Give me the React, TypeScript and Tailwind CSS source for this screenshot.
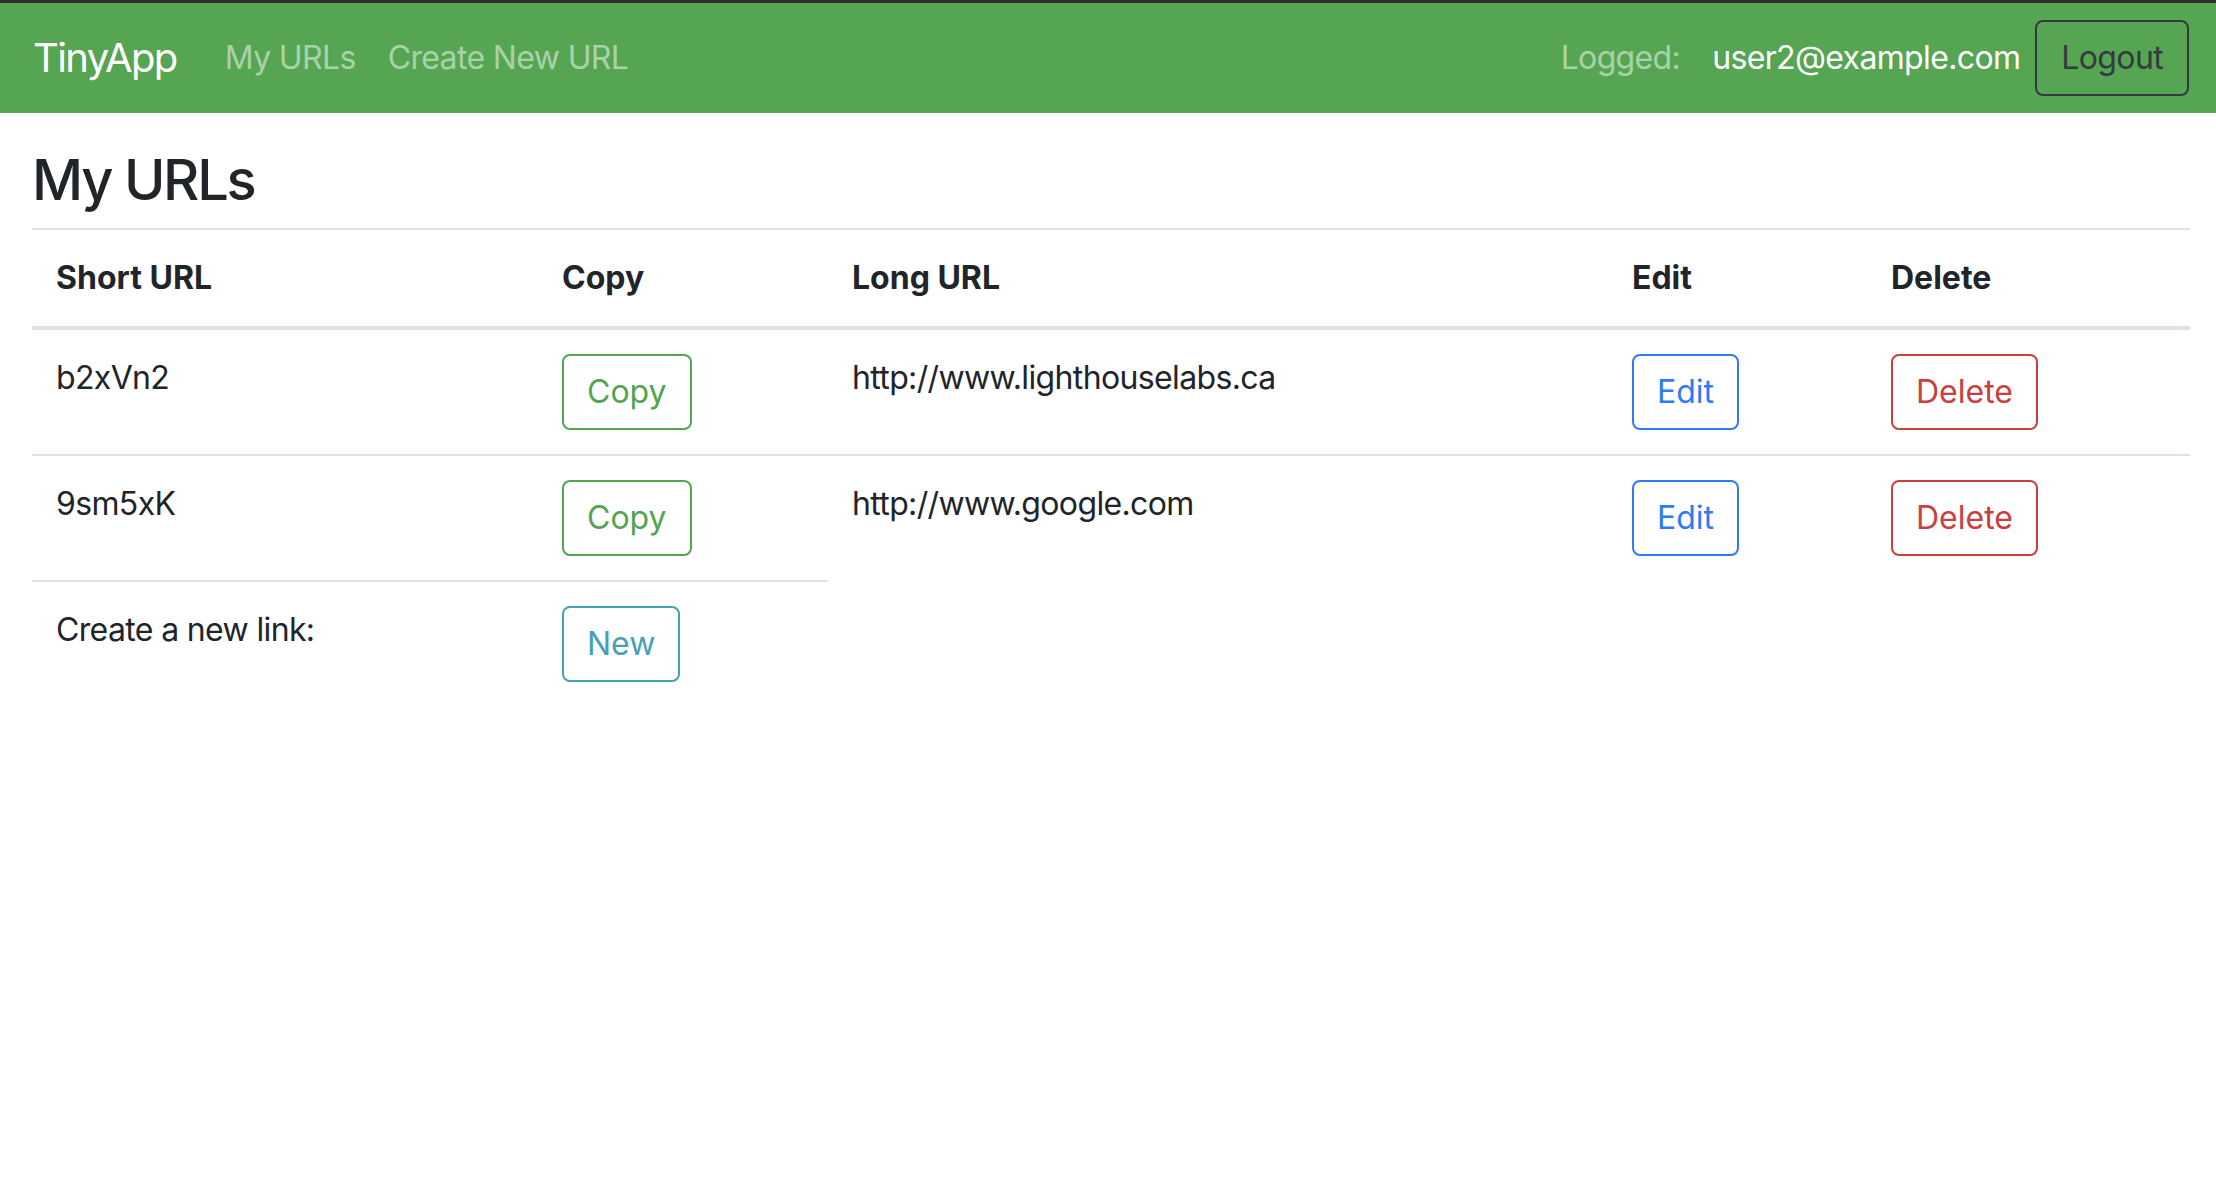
import React from "react";

const rows = [
  { short: "b2xVn2", long: "http://www.lighthouselabs.ca" },
  { short: "9sm5xK", long: "http://www.google.com" },
];

const btn =
  "inline-block border-2 rounded-[8px] px-[23px] py-[12px] text-[32px] leading-[48px] bg-white tracking-normal";

export default function App() {
  return (
    <div
      className="min-h-[1202px] w-[2216px] bg-white text-[#212529] tracking-[-0.04em]"
      style={{ fontFamily: "Inter, 'Liberation Sans', sans-serif" }}
    >
      <nav className="flex items-center justify-between bg-[#55a553] border-t-[3px] border-[#2f2f2f] pl-[33px] pr-[27px] py-[17px]">
        <div className="flex items-center">
          <span className="text-[40px] leading-[60px] text-white mr-[32px] tracking-[-0.04em]">TinyApp</span>
          <span className="text-[32px] leading-[48px] text-white/50 px-[16px]">My URLs</span>
          <span className="text-[32px] leading-[48px] text-white/50 px-[16px]">Create New URL</span>
        </div>
        <div className="flex items-center">
          <span className="text-[32px] leading-[48px] text-white/50">Logged:</span>
          <span className="text-[32px] leading-[48px] text-white ml-[32px] mr-[15px]">user2@example.com</span>
          <span className="border-2 border-[#343a40] rounded-[8px] px-[24px] py-[12px] text-[32px] leading-[48px] text-[#343a40]">
            Logout
          </span>
        </div>
      </nav>

      <div className="pl-[32px] pr-[26px]">
        <h1 className="text-[56px] leading-[67px] font-medium mt-[34px] mb-[14px] tracking-[-0.04em]">My URLs</h1>
        <table className="w-full table-fixed border-collapse text-[32px] leading-[48px]">
          <colgroup>
            <col className="w-[506px]" />
            <col className="w-[290px]" />
            <col className="w-[780px]" />
            <col className="w-[259px]" />
            <col />
          </colgroup>
          <thead>
            <tr className="border-t-2 border-[#dee2e6]">
              <th className="text-left font-bold p-[24px] border-b-4 border-[#dee2e6] tracking-normal">Short URL</th>
              <th className="text-left font-bold p-[24px] border-b-4 border-[#dee2e6] tracking-normal">Copy</th>
              <th className="text-left font-bold p-[24px] border-b-4 border-[#dee2e6] tracking-normal">Long URL</th>
              <th className="text-left font-bold p-[24px] border-b-4 border-[#dee2e6] tracking-normal">Edit</th>
              <th className="text-left font-bold p-[24px] border-b-4 border-[#dee2e6] tracking-normal">Delete</th>
            </tr>
          </thead>
          <tbody>
            {rows.map((r, i) => (
              <tr key={r.short} className={i > 0 ? "border-t-2 border-[#dee2e6]" : ""}>
                <td className="align-top p-[24px]">{r.short}</td>
                <td className="align-top p-[24px]">
                  <span className={btn + " border-[#53a451] text-[#53a451]"}>Copy</span>
                </td>
                <td className="align-top p-[24px]">{r.long}</td>
                <td className="align-top p-[24px]">
                  <span className={btn + " border-[#2f7bf6] text-[#2f7bf6]"}>Edit</span>
                </td>
                <td className="align-top p-[24px]">
                  <span className={btn + " border-[#c9403f] text-[#c9403f]"}>Delete</span>
                </td>
              </tr>
            ))}
            <tr>
              <td className="align-top p-[24px] border-t-2 border-[#dee2e6]">Create a new link:</td>
              <td className="align-top p-[24px] border-t-2 border-[#dee2e6]">
                <span className={btn + " border-[#46a1b6] text-[#46a1b6]"}>New</span>
              </td>
              <td />
              <td />
              <td />
            </tr>
          </tbody>
        </table>
      </div>
    </div>
  );
}
